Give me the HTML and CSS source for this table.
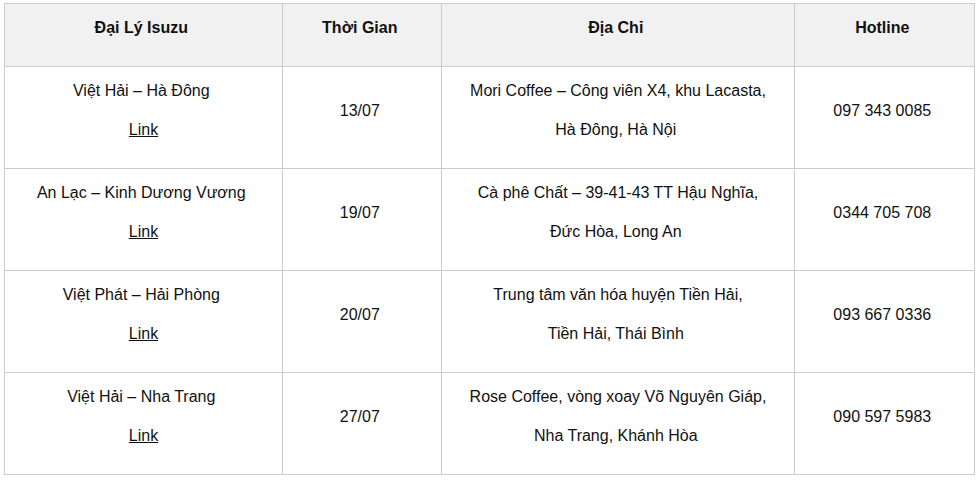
FILE: index.html
```html
<!DOCTYPE html>
<html lang="vi">
<head>
<meta charset="utf-8">
<title>Lịch trình</title>
<link rel="stylesheet" href="styles.css">
</head>
<body>
<div class="wrap">
<table class="schedule">
  <colgroup>
    <col class="c1"><col class="c2"><col class="c3"><col class="c4">
  </colgroup>
  <thead>
    <tr><th>Đại Lý Isuzu&nbsp;</th><th>Thời Gian&nbsp;</th><th>Địa Chỉ&nbsp;</th><th>Hotline&nbsp;</th></tr>
  </thead>
  <tbody>
    <tr>
      <td><div>Việt Hải – Hà Đông&nbsp;</div><div><a href="#">Link</a></div></td>
      <td>13/07&nbsp;</td>
      <td><div>Mori Coffee – Công viên X4, khu Lacasta,</div><div>Hà Đông, Hà Nội&nbsp;</div></td>
      <td>097 343 0085&nbsp;</td>
    </tr>
    <tr>
      <td><div>An Lạc – Kinh Dương Vương&nbsp;</div><div><a href="#">Link</a></div></td>
      <td>19/07&nbsp;</td>
      <td><div>Cà phê Chất – 39-41-43 TT Hậu Nghĩa,</div><div>Đức Hòa, Long An&nbsp;</div></td>
      <td>0344 705 708&nbsp;</td>
    </tr>
    <tr>
      <td><div>Việt Phát – Hải Phòng&nbsp;</div><div><a href="#">Link</a></div></td>
      <td>20/07&nbsp;</td>
      <td><div>Trung tâm văn hóa huyện Tiền Hải,</div><div>Tiền Hải, Thái Bình&nbsp;</div></td>
      <td>093 667 0336&nbsp;</td>
    </tr>
    <tr>
      <td><div>Việt Hải – Nha Trang&nbsp;</div><div><a href="#">Link</a></div></td>
      <td>27/07&nbsp;</td>
      <td><div>Rose Coffee, vòng xoay Võ Nguyên Giáp,</div><div>Nha Trang, Khánh Hòa&nbsp;</div></td>
      <td>090 597 5983&nbsp;</td>
    </tr>
  </tbody>
</table>
</div>
</body>
</html>
```
FILE: styles.css
```css
html, body {
  margin: 0;
  padding: 0;
  background: #fff;
}
body {
  font-family: "Liberation Sans", Arial, sans-serif;
  font-size: 16px;
  color: #111;
}
.wrap {
  padding: 3px 0 0 4px;
}
.schedule {
  border-collapse: collapse;
  table-layout: fixed;
  width: 970px;
}
.c1 { width: 278px; }
.c2 { width: 159px; }
.c3 { width: 353px; }
.c4 { width: 180px; }
.schedule th,
.schedule td {
  border: 1px solid #cccccc;
  padding: 4px 10px 19px;
  line-height: 39px;
  text-align: center;
  vertical-align: middle;
}
.schedule th {
  background: #f1f1f1;
  font-weight: bold;
  color: #111;
}
.schedule a {
  color: #111;
  text-decoration: underline;
}
```
